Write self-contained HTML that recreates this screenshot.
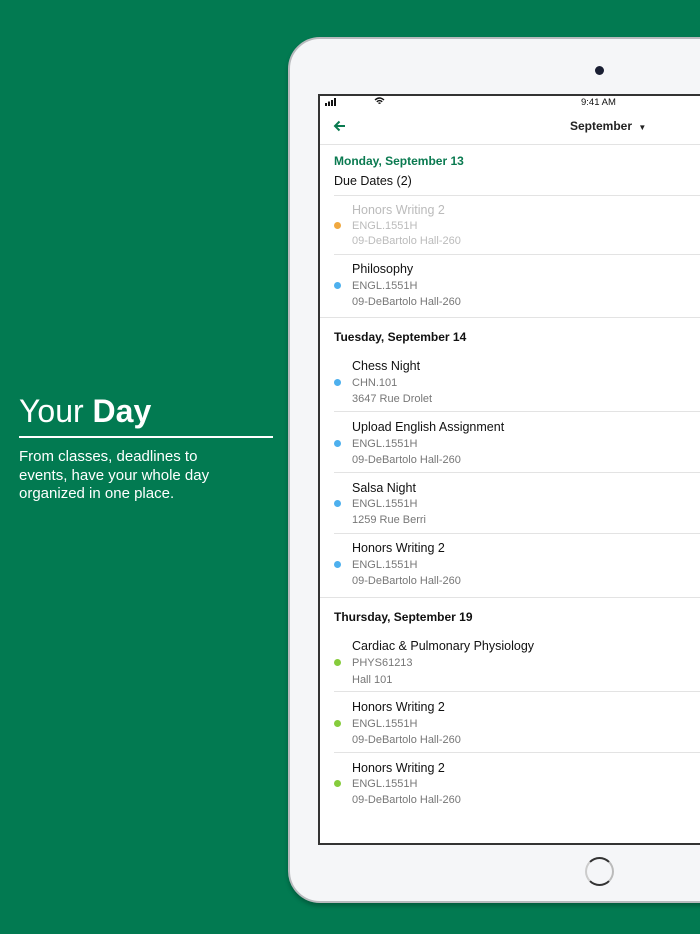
<!DOCTYPE html>
<html><head><meta charset="utf-8"><style>
*{margin:0;padding:0;box-sizing:border-box}
body{width:700px;height:934px;background:#027a51;font-family:"Liberation Sans",Arial,sans-serif;position:relative;overflow:hidden}
.a{position:absolute;white-space:nowrap}
.dev{position:absolute;left:288px;top:37px;width:460px;height:866px;background:#f5f6f8;border-radius:32px;border:2px solid #b8babd;box-shadow:0 3px 4px rgba(0,0,0,.25)}
.scr{position:absolute;left:318px;top:94px;width:400px;height:751px;background:#fff;border:2px solid #333;border-right:none}
.t{font-size:12.5px;color:#111;line-height:16px}
.s{font-size:11px;color:#777;line-height:16px}
.g .t,.g .s{color:#bbb}
.dot{position:absolute;width:7px;height:7px;border-radius:50%}
.hr{position:absolute;height:1px;background:#e3e3e3}
</style></head><body>
<div class="a" style="left:19px;top:391px;font-size:32px;color:#fff;line-height:40px">Your <b>Day</b></div>
<div class="a" style="left:19px;top:436px;width:254px;height:2px;background:#fff"></div>
<div class="a" style="left:19px;top:448px;font-size:15px;color:#fff;line-height:18.5px;white-space:normal;width:260px">From classes, deadlines to<br>events, have your whole day<br>organized in one place.</div>
<div class="dev"></div>
<div class="a" style="left:595px;top:66px;width:9px;height:9px;border-radius:50%;background:#1a1f33"></div>
<div class="a" style="left:585px;top:857px;width:29px;height:29px;border-radius:50%;border:2px solid #333;border-left-color:#ccc;border-right-color:#bbb"></div>
<div class="scr"></div>
<div class="a" style="left:0;top:0;width:700px;height:934px">
<svg class="a" style="left:325px;top:98px" width="13" height="8" viewBox="0 0 13 8"><rect x="0" y="5" width="2" height="3" fill="#111"/><rect x="3" y="3.5" width="2" height="4.5" fill="#111"/><rect x="6" y="2" width="2" height="6" fill="#111"/><rect x="9" y="0" width="2" height="8" fill="#111"/></svg>
<svg class="a" style="left:374px;top:97px" width="11" height="8" viewBox="0 0 11 8"><path d="M1 3Q5.5-1 10 3M2.8 4.8Q5.5 2.3 8.2 4.8M4.5 6.5Q5.5 5.6 6.5 6.5" stroke="#111" stroke-width="1.4" fill="none"/></svg>
<div class="a" style="left:581px;top:97px;font-size:9.5px;color:#111">9:41 AM</div>
<svg class="a" style="left:333px;top:120px" width="13" height="12" viewBox="0 0 13 12"><path d="M12 6H2M6.5 1.5L2 6l4.5 4.5" stroke="#0a7a50" stroke-width="2" fill="none"/></svg>
<div class="a" style="left:570px;top:119px;font-size:12px;font-weight:bold;color:#222">September <span style="font-size:8px;margin-left:3px">▼</span></div>
<div class="hr" style="left:320px;top:144px;width:400px"></div>
<div class="a" style="left:334px;top:154px;font-size:12px;font-weight:bold;color:#0a7a50">Monday, September 13</div>
<div class="a t" style="left:334px;top:173px">Due Dates (2)</div>
<div class="hr" style="left:334px;top:195px;width:380px"></div>

<div class="g"><div class="a t" style="left:352px;top:202px">Honors Writing 2</div><div class="a s" style="left:352px;top:218px">ENGL.1551H</div><div class="a s" style="left:352px;top:233px">09-DeBartolo Hall-260</div></div>
<div class="dot" style="left:334px;top:222px;background:#f0a840"></div>
<div class="hr" style="left:334px;top:254px;width:380px"></div>
<div class="a t" style="left:352px;top:261px">Philosophy</div><div class="a s" style="left:352px;top:278px">ENGL.1551H</div><div class="a s" style="left:352px;top:294px">09-DeBartolo Hall-260</div>
<div class="dot" style="left:334px;top:282px;background:#4db0ee"></div>
<div class="hr" style="left:320px;top:317px;width:400px"></div>

<div class="a" style="left:334px;top:330px;font-size:12px;font-weight:bold;color:#111">Tuesday, September 14</div>
<div class="a t" style="left:352px;top:358px">Chess Night</div><div class="a s" style="left:352px;top:375px">CHN.101</div><div class="a s" style="left:352px;top:391px">3647 Rue Drolet</div>
<div class="dot" style="left:334px;top:379px;background:#4db0ee"></div>
<div class="hr" style="left:334px;top:411px;width:380px"></div>
<div class="a t" style="left:352px;top:419px">Upload English Assignment</div><div class="a s" style="left:352px;top:436px">ENGL.1551H</div><div class="a s" style="left:352px;top:452px">09-DeBartolo Hall-260</div>
<div class="dot" style="left:334px;top:440px;background:#4db0ee"></div>
<div class="hr" style="left:334px;top:472px;width:380px"></div>
<div class="a t" style="left:352px;top:480px">Salsa Night</div><div class="a s" style="left:352px;top:496px">ENGL.1551H</div><div class="a s" style="left:352px;top:512px">1259 Rue Berri</div>
<div class="dot" style="left:334px;top:500px;background:#4db0ee"></div>
<div class="hr" style="left:334px;top:533px;width:380px"></div>
<div class="a t" style="left:352px;top:540px">Honors Writing 2</div><div class="a s" style="left:352px;top:557px">ENGL.1551H</div><div class="a s" style="left:352px;top:573px">09-DeBartolo Hall-260</div>
<div class="dot" style="left:334px;top:561px;background:#4db0ee"></div>
<div class="hr" style="left:320px;top:597px;width:400px"></div>

<div class="a" style="left:334px;top:610px;font-size:12px;font-weight:bold;color:#111">Thursday, September 19</div>
<div class="a t" style="left:352px;top:638px">Cardiac &amp; Pulmonary Physiology</div><div class="a s" style="left:352px;top:655px">PHYS61213</div><div class="a s" style="left:352px;top:672px">Hall 101</div>
<div class="dot" style="left:334px;top:659px;background:#86cc3c"></div>
<div class="hr" style="left:334px;top:691px;width:380px"></div>
<div class="a t" style="left:352px;top:699px">Honors Writing 2</div><div class="a s" style="left:352px;top:716px">ENGL.1551H</div><div class="a s" style="left:352px;top:732px">09-DeBartolo Hall-260</div>
<div class="dot" style="left:334px;top:720px;background:#86cc3c"></div>
<div class="hr" style="left:334px;top:752px;width:380px"></div>
<div class="a t" style="left:352px;top:760px">Honors Writing 2</div><div class="a s" style="left:352px;top:776px">ENGL.1551H</div><div class="a s" style="left:352px;top:792px">09-DeBartolo Hall-260</div>
<div class="dot" style="left:334px;top:780px;background:#86cc3c"></div>
</div>
</body></html>
